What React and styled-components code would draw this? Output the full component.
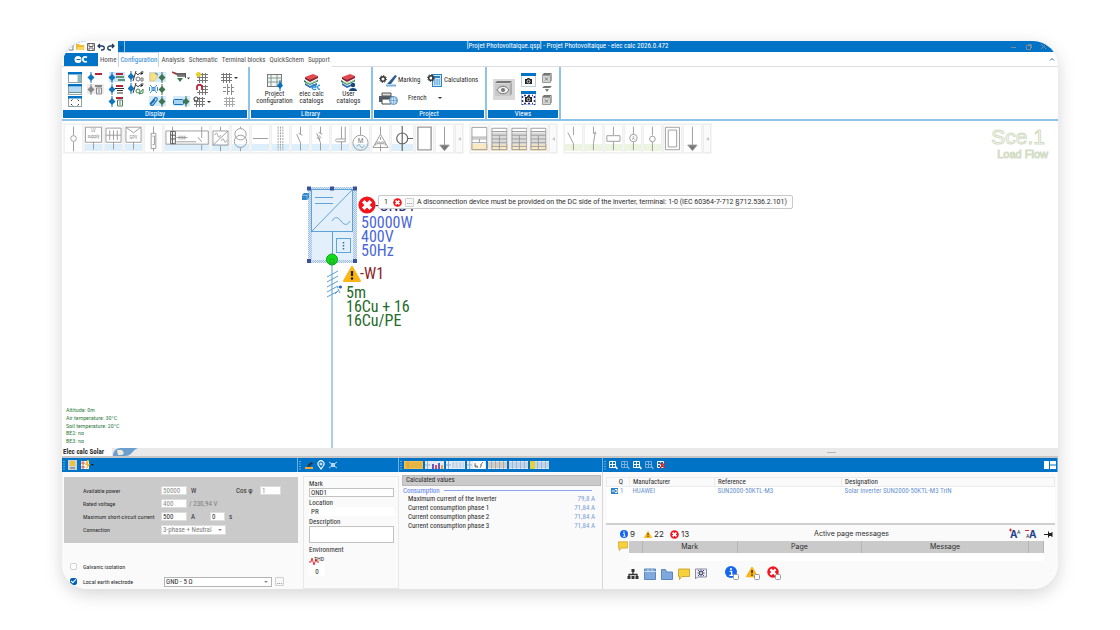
import React from 'react';
import styled, { createGlobalStyle } from 'styled-components';

const GlobalStyle = createGlobalStyle`
  * {
    box-sizing: border-box;
  }

  body {
    margin: 0;
    background: #ffffff;
    color: #2c2c2c;
    font-family: 'Roboto Condensed', 'Liberation Sans Narrow', 'Liberation Sans', sans-serif;
    font-size: 7px;
    line-height: 8px;
  }

  button, input, select, textarea {
    margin: 0;
    padding: 0;
    font: inherit;
    color: inherit;
  }

  svg {
    display: block;
    flex: none;
  }
`;

const blue = '#0173c7';
const paleBlue = '#8fc3ea';
const ink = '#3a3a3a';

/* ---------- window ---------- */

const Page = styled.div`
  padding: 41px 62px;
`;

const Window = styled.main`
  overflow: hidden;
  border-radius: 25px;
  background: #ffffff;
  box-shadow: 0 5px 18px rgba(0, 0, 0, 0.17);
`;

const TitleBar = styled.header`
  display: flex;
  height: 11px;
  background: ${blue};
  color: #ffffff;
`;

const QuickAccess = styled.div`
  display: flex;
  align-items: center;
  gap: 2px;
  width: 56px;
  padding-left: 4px;
  background: #ffffff;
`;

const Title = styled.h1`
  flex: 1;
  margin: 0;
  font-size: 7px;
  font-weight: normal;
  line-height: 10px;
  text-align: center;
`;

const WindowControls = styled.div`
  display: flex;
  align-items: center;
  gap: 8px;
  width: 48px;
`;

const IconButton = styled.button`
  display: flex;
  align-items: center;
  justify-content: center;
  border: 0;
  background: none;
`;

const TabRow = styled.nav`
  display: flex;
  height: 15px;
  padding-left: 2px;
  border-bottom: 1px solid #dedede;
`;

const AppButton = styled.button`
  display: flex;
  align-items: center;
  justify-content: center;
  width: 34px;
  height: 13px;
  margin: 1px 0 0;
  border: 0;
  background: ${blue};
`;

const Tab = styled.button`
  height: 15px;
  padding: 0 1px;
  border: 1px solid ${props => (props.$active ? '#bcd9ee' : 'transparent')};
  border-bottom: 0;
  background: #ffffff;
  color: ${props => (props.$active ? '#2a86cf' : '#505050')};
`;

const Collapse = styled(IconButton)`
  margin-left: auto;
  width: 12px;
`;

/* ---------- ribbon ---------- */

const Ribbon = styled.section`
  display: flex;
  height: 54px;
  border-bottom: 2px solid ${paleBlue};
`;

const Group = styled.section`
  display: flex;
  flex-direction: column;
  width: ${props => props.$width}px;
  border-right: 2px solid ${paleBlue};
  padding: 1px 1px 1px 0;
`;

const GroupBody = styled.div`
  flex: 1;
  display: flex;
  align-items: center;
`;

const GroupTitle = styled.h2`
  margin: 0 0 0 1px;
  height: 8px;
  background: ${blue};
  color: #ffffff;
  font-size: 7px;
  font-weight: normal;
  line-height: 8px;
  text-align: center;
`;

const DisplayGrid = styled.div`
  display: grid;
  grid-template-columns: 20px 20px 22px 18px 24px 24px 18px 36px;
  grid-template-rows: repeat(3, 12px);
  grid-auto-flow: column;
  padding-left: 3px;
  place-items: center;
`;

const BigButton = styled.button`
  display: flex;
  flex-direction: column;
  align-items: center;
  width: 37px;
  border: 0;
  background: none;
  line-height: 7px;
`;

const LibraryBody = styled(GroupBody)`
  justify-content: center;
  padding-left: 3px;
`;

const ProjectGrid = styled.div`
  display: grid;
  grid-template-columns: 48px 1fr;
  grid-template-rows: 18px 18px;
  width: 100%;
  padding-left: 6px;
`;

const InlineButton = styled.button`
  display: flex;
  align-items: center;
  gap: 1px;
  border: 0;
  background: none;
`;

const LanguageRow = styled.div`
  grid-column: 1 / 3;
  display: flex;
  align-items: center;
  gap: 10px;
`;

const Language = styled.select`
  width: 38px;
  border: 0;
  background: none;
  appearance: none;
`;

const Caret = styled.span`
  width: 0;
  margin-left: ${props => (props.$pull ? '-18px' : '0')};
  border: 2px solid transparent;
  border-top-color: #333333;
  border-bottom: 0;
`;

const ViewsBody = styled(GroupBody)`
  gap: 6px;
  padding-left: 6px;
`;

const Column = styled.div`
  display: flex;
  flex-direction: column;
  gap: ${props => props.$gap}px;
`;

/* ---------- drawing area ---------- */

const Canvas = styled.section`
  position: relative;
  height: 327px;
`;

const Palettes = styled.div`
  display: flex;
  align-items: flex-start;
  gap: 5px;
  padding: 2px 1px;

  text {
    fill: #8a8a8a;
    stroke: none;
  }
`;

const Palette = styled.div`
  display: flex;
  gap: 1px;
  width: ${props => props.$width}px;
  padding: 1px;
  background: #f5f5f5;
`;

const Cell = styled.button`
  flex: ${props => props.$span || 1} 1 0;
  min-width: 0;
  height: 29px;
  padding: 0;
  border: 1px solid #f0f0f0;
  background: ${props =>
    props.$tint
      ? `linear-gradient(#ffffff 70%, ${props.$tint} 70%, ${props.$tint} 96%, #ffffff 96%)`
      : '#ffffff'};

  svg {
    width: 100%;
    height: 27px;
  }
`;

const Fold = styled.button`
  display: flex;
  align-items: center;
  justify-content: center;
  width: 8px;
  border: 1px solid #ececec;
  background: #fafafa;
`;

const Scenario = styled.div`
  position: absolute;
  top: 5px;
  right: 10px;
  color: #ffffff;
  text-align: right;
  font-family: 'Liberation Sans', Arial, sans-serif;
  -webkit-text-stroke: 1px #d3ddc6;
`;

const ScenarioName = styled.div`
  padding-right: 3px;
  font-size: 21px;
  line-height: 22px;
`;

const ScenarioMode = styled.div`
  font-size: 11px;
  line-height: 12px;
`;

const Node = styled.div`
  position: absolute;
  left: ${props => props.$x}px;
  top: ${props => props.$y}px;
  color: ${props => props.$color};
  font-size: 16px;
  line-height: 14px;
  white-space: nowrap;
`;

const Wire = styled.div`
  position: absolute;
  left: 269px;
  top: 140px;
  bottom: 0;
  width: 2px;
  background: #a9cfea;
`;

const Message = styled.div`
  position: absolute;
  left: 316px;
  top: 74px;
  display: flex;
  align-items: center;
  width: 415px;
  height: 14px;
  border: 1px solid #c9c9c9;
  border-radius: 2px;
  background: #fdfdfd;
  font-family: Roboto, 'Liberation Sans', sans-serif;
  font-size: 7px;
  white-space: nowrap;
`;

const MessageCount = styled.span`
  width: 14px;
  text-align: center;
`;

const MoreButton = styled.button`
  width: ${props => props.$width}px;
  height: 9px;
  border: 1px solid #d0d0d0;
  border-radius: 1px;
  background: #f8f8f8;
  line-height: 4px;
`;

const MessageText = styled.span`
  padding-left: 3px;
`;

const MessageMore = styled(MoreButton)`
  margin-left: 3px;
`;

const Conditions = styled.ul`
  position: absolute;
  left: 4px;
  bottom: 4px;
  display: flex;
  flex-direction: column;
  justify-content: space-between;
  height: 38px;
  margin: 0;
  padding: 0;
  list-style: none;
  color: #2f7d43;
  font-size: 6px;
  line-height: 7px;
`;

/* ---------- page tabs ---------- */

const PageTabs = styled.div`
  display: flex;
  align-items: center;
  height: 10px;
  border-bottom: 2px solid #c6c6c6;
  background: #e9e9e9;
`;

const PageTab = styled.button`
  height: 8px;
  padding: 0 8px 0 1px;
  border: 0;
  background: #ffffff;
  font-weight: bold;
`;

const Grip = styled.span`
  width: 9px;
  height: 1px;
  margin-left: auto;
  margin-right: 222px;
  background: #b5b5b5;
`;

/* ---------- bottom panels ---------- */

const Bottom = styled.section`
  display: grid;
  grid-template-columns: 236px 101px 204px 1fr;
  grid-template-rows: 14px 117px;
  background: #fafafa;
`;

const Toolbar = styled.div`
  display: flex;
  align-items: center;
  gap: ${props => props.$gap}px;
  padding: 0 1px;
  border-right: 1px solid #6db1e2;
  background: ${blue};
`;

const ToolbarEnd = styled.span`
  margin-left: auto;
`;

const PropertyPanel = styled.form`
  padding: 5px 0 0 2px;
`;

const GreyArea = styled.div`
  padding: 7px 0 7px 19px;
  background: #cacaca;
`;

const FormRow = styled.div`
  display: flex;
  align-items: center;
  height: 13px;
`;

const FormLabel = styled.label`
  width: 78px;
  font-size: 6px;
  white-space: nowrap;
`;

const Field = styled.input`
  width: ${props => props.$width}px;
  height: 9px;
  padding: 0 1px;
  border: 1px solid #dcdcdc;
  background: #ffffff;

  &:disabled {
    color: #8d8d8d;
  }
`;

const Unit = styled.span`
  width: ${props => props.$width}px;
  padding-left: ${props => props.$indent || 4}px;
  color: ${props => (props.$muted ? '#7d7d7d' : 'inherit')};
`;

const CosLabel = styled.label`
  width: 24px;
`;

const SelectBox = styled.div`
  display: flex;
  align-items: center;
  width: ${props => props.$width}px;
  height: 10px;
  border: 1px solid ${props => (props.$strong ? '#b4b4b4' : '#dedede')};
  background: #ffffff;
  color: ${props => (props.$strong ? 'inherit' : '#7d7d7d')};
`;

const Picker = styled.select`
  flex: 1;
  min-width: 0;
  border: 0;
  padding-left: 1px;
  background: none;
  appearance: none;

  &:disabled {
    opacity: 1;
  }
`;

const SmallCaret = styled(Caret)`
  margin-right: 3px;
  border-top-color: #8a8a8a;
`;

const Options = styled.div`
  padding: 16px 0 0 6px;
`;

const Option = styled.div`
  display: flex;
  align-items: center;
  height: 15px;
`;

const Tick = styled.input`
  appearance: none;
  width: 7px;
  height: 7px;
  margin-right: 6px;
  border: 1px solid #cfcfcf;
  border-radius: 2px;
  background: #ffffff;

  &:checked {
    border-color: #0062b8;
    background: #0062b8;
  }

  &:checked::after {
    content: '';
    display: block;
    width: 4px;
    height: 2px;
    border: solid #ffffff;
    border-width: 0 0 1px 1px;
    rotate: -45deg;
  }
`;

const OptionLabel = styled.label`
  width: 81px;
  font-size: 6px;
`;

const IdentityPanel = styled.form`
  display: flex;
  flex-direction: column;
  margin: 4px 0 0 5px;
  padding: 3px 4px 0 5px;
  border: 1px solid #e8e8e8;
`;

const TextField = styled.input`
  height: 9px;
  margin-bottom: 2px;
  padding: 0 1px;
  border: 1px solid ${props => (props.$plain ? '#ffffff' : '#c2c2c2')};
  background: #ffffff;
`;

const TextArea = styled.textarea`
  height: 17px;
  margin-bottom: 3px;
  border: 1px solid #c2c2c2;
  background: #ffffff;
  resize: none;
`;

const Thd = styled.output`
  display: flex;
  flex-direction: column;
  align-items: center;
  gap: 2px;
  width: 16px;
  padding-top: 2px;
  background: linear-gradient(#fafafa, #ffffff);
`;

const ResultsPanel = styled.section`
  padding: 3px 1px 0 3px;
  border-right: 1px solid #d8d8d8;
`;

const PanelTitle = styled.h3`
  margin: 0;
  padding-left: 3px;
  height: 11px;
  border: 1px solid #b9b9b9;
  background: #cbcbcb;
  font-size: 7px;
  font-weight: normal;
  line-height: 9px;
`;

const Section = styled.h4`
  display: flex;
  align-items: center;
  gap: 4px;
  height: 9px;
  margin: 0;
  padding: 0 9px 0 1px;
  color: #5b7fe8;
  font-size: 7px;
  font-weight: normal;

  &::after {
    content: '';
    flex: 1;
    height: 1px;
    background: #8ba4ee;
  }
`;

const Results = styled.table`
  width: 100%;
  border-collapse: collapse;

  td,
  th {
    height: 9px;
    padding: 0 6px;
    font-weight: normal;
    line-height: 9px;
    text-align: left;
  }

  td {
    color: #7aa0d8;
    text-align: right;
  }
`;

const ReferencePanel = styled.section`
  display: flex;
  flex-direction: column;
  padding: 5px 3px 0;
`;

const Articles = styled.table`
  width: 100%;
  table-layout: fixed;
  border-collapse: collapse;
  background: #ffffff;

  th,
  td {
    height: 8px;
    padding: 0 0 0 3px;
    font-weight: normal;
    text-align: left;
    white-space: nowrap;
  }

  th {
    border: 1px solid #ebebeb;
    background: #fafafa;
  }

  td {
    color: #6b93d0;
  }
`;

const ArticleArea = styled.div`
  height: 48px;
  background: #ffffff;
  border-bottom: 2px solid #cfcfcf;
`;

const Qty = styled.span`
  display: flex;
  align-items: center;
  justify-content: flex-end;
  gap: 2px;
  padding-right: 6px;
  margin-left: -3px;
`;

const MessageBar = styled.div`
  display: flex;
  align-items: center;
  height: 16px;
  padding: 2px 2px 0 14px;
  font-family: Inter, 'Liberation Sans', sans-serif;
`;

const Counter = styled.span`
  display: flex;
  align-items: center;
  gap: 2px;
  width: ${props => props.$width}px;
  font-size: 8px;
`;

const MessageHeading = styled.h3`
  flex: 1;
  margin: 0;
  font-size: 7px;
  font-weight: normal;
  text-align: center;
`;

const FontTools = styled.div`
  display: flex;
  align-items: center;
  gap: 3px;
`;

const MessageRow = styled.div`
  display: flex;
  gap: 1px;
  padding: 0 11px 0 12px;
`;

const Messages = styled.table`
  flex: 1;
  table-layout: fixed;
  border-collapse: collapse;
  font-family: Inter, 'Liberation Sans', sans-serif;

  th {
    height: 12px;
    padding: 0;
    border-right: 1px solid #b5b5b5;
    background: #cacaca;
    font-weight: normal;
  }

  td {
    height: 8px;
    padding: 0;
    background: #ffffff;
  }
`;

const FilterBar = styled.div`
  display: flex;
  align-items: center;
  gap: 5px;
  padding: 5px 0 0 21px;
`;

const FilterGap = styled.span`
  width: 8px;
`;

/* ---------- icons ---------- */

const Svg = ({ w, h, children, ...rest }) => (
  <svg
    width={w}
    height={h}
    viewBox={`0 0 ${w} ${h}`}
    fill="none"
    stroke={ink}
    strokeWidth="1"
    aria-hidden="true"
    {...rest}>
    {children}
  </svg>
);

const PanelIcon = ({ kind }) => (
  <Svg w={14} h={11} stroke="none">
    <rect x=".5" y="1.5" width="13" height="9" fill="#fff" stroke="#8fa5a5" />
    <rect width="14" height="2.5" fill={blue} />
    {kind === 'side' && <rect x="9.5" y="2.5" width="3.5" height="7.5" fill="#8fb9b9" />}
    {kind === 'fill' && <rect x="1" y="3" width="12" height="5" fill="#b5daf2" />}
    {kind === 'fill' && <path d="M1 8.5h12" stroke="#6f8f8f" />}
    {kind === 'expand' && (
      <path d="M3 5l1.500-1.500M11 5L9.500 3.500M3 8l1.500 1.500M11 8L9.500 9.500" stroke="#333" />
    )}
  </Svg>
);

const Diamond = ({ x = 0, color = '#1274bd' }) => (
  <g>
    <path d={`M${x + 3} 0v11`} stroke={color} fill="none" />
    <path d={`M${x + 3} 2l3.500 3.500-3.500 3.500-3.500-3.500z`} fill={color} stroke="none" />
  </g>
);

const LabelIcon = ({ kind }) => (
  <Svg w={17} h={11} stroke="none">
    {kind === 'hover' && <rect x="1" width="16" height="10" fill="#cfe6fa" />}
    {kind === 'off' && <rect width="17" height="10" fill="#ececec" />}
    <Diamond x={1} color={kind === 'off' ? '#888' : '#1274bd'} />
    <rect x="8" y="1" width="7" height="2" fill={kind === 'off' ? '#888' : '#b3263a'} />
    {kind === 'hover' && <path d="M8 5h8M10 8h7" stroke="#3b7c4e" strokeWidth="1.500" />}
    {kind === 'lines' && <path d="M7 4.500h9M9 6.500h6M9 9h6" stroke="#333" strokeWidth="1.200" />}
    {(kind === 'bin' || kind === 'off') && (
      <path d="M9.500 4h5v6h-5zM11 6h2M11 8h2" stroke={kind === 'off' ? '#888' : '#4a7d5c'} />
    )}
  </Svg>
);

const ToolsIcon = ({ alt }) => (
  <Svg w={16} h={12} stroke="none">
    <Diamond x={0} />
    <path d="M8 0L5 10" stroke="#333" />
    <path d="M8.500 2c0 2 3 2 3 0M13 4V1h2.500M13 2.500h2" stroke="#222" />
    <circle cx="10" cy="8" r="2" stroke={alt ? '#3c8a4c' : '#777'} />
    <path d={alt ? 'M11 11l4-5v4z' : 'M13 7h2v3h-2z'} stroke={alt ? '#3c8a4c' : '#777'} />
  </Svg>
);

const NoteIcon = ({ kind }) => (
  <Svg w={17} h={11} stroke="none">
    {kind !== 'net' && <rect width="17" height="10" fill="#d4e9fb" />}
    {kind === 'note' && <path d="M1 1h7v5l-3 3H1z" fill="#f6e08a" stroke="#d8bd55" strokeWidth=".6" />}
    {kind === 'note' && <path d="M6 1l3 2" stroke="#2f7fc4" />}
    {kind === 'net' && <path d="M1 1l7 8M8 1L1 9M3 3.500h3v3H3zM.5 3v4M8.500 3v4" stroke="#3b90d2" />}
    {kind === 'clip' && (
      <path d="M1 8l5-6c1-1 3 0 2 2L4 9C3 10 1 9 2 8l4-4" stroke="#1670b8" strokeWidth="1.200" />
    )}
    {kind === 'tag' && <rect x="0.500" y="3.500" width="10" height="5" rx="1" fill="#a9d3f2" stroke="#1670b8" />}
    <Diamond x={10} color="#3f7551" />
  </Svg>
);

const CableIcon = () => (
  <Svg w={18} h={12} stroke="none">
    <path d="M2 1l3 1h8v4H6z" fill="#666" />
    <path d="M0 1l4 2" stroke="#a33" strokeWidth="1.500" />
    <path d="M5 5h9" stroke="#999" />
    <path d="M5 7h6l-3 4z" fill="#3c7a4c" />
    <path d="M13.500 2v5" stroke="#555" />
    <path d="M15 6.500h3l-1.500 2z" fill="#444" />
  </Svg>
);

const GridIcon = ({ mark, caret, light }) => (
  <Svg w={caret ? 18 : 12} h={11} stroke="none">
    {mark !== 'cross' && (
      <path
        d="M1 2.500h11M1 5.500h11M1 8.500h11M3.500 1v10M6.500 1v10M9.500 1v10"
        stroke={light ? '#aaa' : '#777'}
      />
    )}
    {mark === 'sun' && <circle cx="2.500" cy="2.500" r="2.500" fill="#e4cf2e" />}
    {mark === 'magnet' && <path d="M1 6V3c0-3 5-3 5 0v3" fill="#fff" stroke="#c22338" strokeWidth="1.800" />}
    {mark === 'gear' && <circle cx="3" cy="3" r="2" fill="#fff" stroke="#444" strokeWidth="1.200" />}
    {mark === 'cross' && <path d="M0 3.500h12M0 7.500h12M4.500 0v11M8.500 0v11" stroke="#888" strokeDasharray="3 1" />}
    {caret && <path d="M14 5h4l-2 2z" fill="#333" />}
  </Svg>
);

const ProjectIcon = () => (
  <Svg w={16} h={18} stroke="none">
    <rect x=".5" y="1.500" width="14" height="12" fill="#f5f5f5" stroke="#777" />
    <path d="M0 5h15M0 9h15M4 2v11M10 2v11" stroke="#7c9c88" />
    <path d="M13 7v11" stroke={blue} />
    <path d="M13 9l3 3.500-3 3.500-3-3.500z" fill={blue} />
  </Svg>
);

const BooksIcon = ({ user }) => (
  <Svg w={17} h={18} stroke="none">
    <path d="M2 4l8-3 5 2-8 3.500z" fill="#e5484d" />
    <path d="M2 4l5 2.500 8-3.500v2L7 9 2 6z" fill="#8f1f2c" />
    <path d="M1 7l6 3 8-3.500v2L7 12 1 9z" fill="#2e8a57" />
    <path d="M2 10l5 3 7-3v2l-7 3-5-3z" fill="#2f6bb2" />
    <path d="M3 8.500l4 2 7-3" stroke="#fff" strokeWidth=".7" />
    {user ? (
      <g fill="#14457e">
        <circle cx="13" cy="12" r="2.200" />
        <path d="M9 18c0-4 8-4 8 0z" />
      </g>
    ) : (
      <path d="M9 14h4c0-3-4-3-4 0s3 3 4 2M17 12.500c-3-1.500-3 5 0 3.500" stroke="#2c8fd8" strokeWidth="1.300" />
    )}
  </Svg>
);

const Gear = ({ x, y }) => (
  <g>
    <circle cx={x} cy={y} r="2.300" stroke="#333" strokeWidth="1.500" />
    <circle cx={x} cy={y} r="3.500" stroke="#333" strokeDasharray="1.200 1.500" />
  </g>
);

const MarkingIcon = () => (
  <Svg w={18} h={13} stroke="none">
    <Gear x={4} y={5} />
    <path d="M8 10l8-9 2 1-6 8z" fill="#2c5a8f" />
    <path d="M7 11.500h10" stroke="#7aaede" strokeWidth="2" />
  </Svg>
);

const CalcIcon = () => (
  <Svg w={16} h={14} stroke="none">
    <rect x="5.500" y="1.500" width="9" height="12" fill="#cde7fa" stroke="#2c84c4" />
    <rect x="7" y="3" width="6" height="2" fill="#2c84c4" />
    <path d="M7 7h6M7 9h6M7 11h6" stroke="#2c84c4" strokeDasharray="1.500 .8" />
    <Gear x={4} y={5} />
  </Svg>
);

const PrinterIcon = () => (
  <Svg w={19} h={13} stroke="none">
    <path d="M3 1h9v3H3z" fill="#ddd" stroke="#555" />
    <path d="M0 4h15v6H0z" fill="#555d66" />
    <path d="M3 7h9v5H3z" fill="#fff" stroke="#444" />
    <circle cx="14.500" cy="8.500" r="4" fill="#cfe3f5" stroke="#5c93c7" />
    <path d="M10.500 8.500h8M14.500 4.500v8M12.500 5.500c-1 2-1 4 0 6M16.500 5.500c1 2 1 4 0 6" stroke="#5c93c7" strokeWidth=".6" />
  </Svg>
);

const EyeIcon = () => (
  <Svg w={22} h={21} stroke="none">
    <rect width="22" height="21" fill="#d9d9d9" />
    <path d="M2 4l2-2h15l-2 2z" fill="#777" />
    <path d="M2 5h15v12H2z" fill="#c8c8c8" />
    <path d="M4 11c3-5 9-5 12 0-3 5-9 5-12 0z" fill="#eee" stroke="#777" />
    <circle cx="10" cy="11" r="2" fill="#777" />
    <path d="M17 5l2-2v12l-2 2z" fill="#aaa" />
  </Svg>
);

const CameraIcon = ({ dotted }) => (
  <Svg w={15} h={14} stroke="none">
    <rect x=".5" y=".5" width="14" height="13" fill="#fff" stroke="#b9cfe0" />
    <rect width="15" height="3" fill={blue} />
    <path d="M4 6h2l.5-1h2l.5 1h2v5H4z" fill="#222" />
    <circle cx="7.500" cy="8.500" r="1.500" stroke="#fff" strokeWidth=".8" />
    {dotted && <path d="M1.500 5v9M13.500 5v9M3 12.500h9M3 4.500h9" stroke="#2a2f9a" strokeDasharray="2 2" strokeWidth="1.500" />}
  </Svg>
);

const BoxIcon = ({ small }) => (
  <Svg w={10} h={small ? 6 : 10} stroke="none">
    <path d="M0 2l2-2h8L8 2z" fill="#777" />
    {!small && <path d="M.5 2.500h8v7h-8z" fill="#d6d6d6" stroke="#999" />}
    {!small && <path d="M9.500 1v7" stroke="#aaa" />}
    {small ? <path d="M3 3h4L5 6z" fill="#777" /> : <path d="M3 4.500l3 3M6 4.500l-3 3" stroke="#777" />}
  </Svg>
);

const ErrorIcon = ({ size = 9 }) => (
  <svg width={size} height={size} viewBox="0 0 18 18" aria-hidden="true">
    <circle cx="9" cy="9" r="8.600" fill="#f3141c" />
    <path d="M5.200 5.200l7.600 7.600M12.800 5.200l-7.600 7.600" stroke="#fff" strokeWidth="3.600" />
  </svg>
);

const WarnIcon = ({ w = 9, h = 8 }) => (
  <svg width={w} height={h} viewBox="0 0 18 16" aria-hidden="true">
    <path d="M9 1l8 14H1z" fill="#fdb515" stroke="#fdb515" strokeWidth="2" strokeLinejoin="round" />
    <path d="M9 5v5" stroke="#222" strokeWidth="2.200" />
    <circle cx="9" cy="12.500" r="1.300" fill="#222" />
  </svg>
);

const InfoIcon = ({ size = 8 }) => (
  <svg width={size} height={size} viewBox="0 0 18 18" aria-hidden="true">
    <circle cx="9" cy="9" r="9" fill="#1565f0" />
    <path d="M7 8h3v6M6.500 14h6" stroke="#fff" strokeWidth="2" fill="none" />
    <circle cx="9" cy="4.500" r="1.600" fill="#fff" />
  </svg>
);

const NoteBubble = ({ size = 12 }) => (
  <svg width={size} height={size} viewBox="0 0 12 12" aria-hidden="true">
    <path d="M.5 1h11v7.500H4L1.500 11.500V8.500h-1z" fill="#f7d13c" stroke="#c79a1c" strokeWidth=".8" />
  </svg>
);

const GripDots = () => (
  <Svg w={2} h={9} stroke="none">
    <path d="M1 0v9" stroke="#c8e2f5" strokeDasharray="1 1.500" />
  </Svg>
);

const SheetIcon = ({ kind }) => (
  <Svg w={19} h={8} stroke="none">
    <rect width="19" height="8" fill={kind === 'gold' ? '#f0c45a' : '#e4edf5'} />
    {kind === 'gold' && <path d="M1 2h17M1 4h17M1 6h17M4 0v8" stroke="#d59e26" strokeWidth=".8" />}
    {['small', 'grid', 'table', 'split'].includes(kind) && (
      <path
        d={kind === 'small' ? 'M6 2h12M6 4h12M6 6h12' : 'M0 2h19M0 4h19M0 6h19M3.500 0v8M7.500 0v8M11.500 0v8M15.500 0v8'}
        stroke={kind === 'grid' ? '#a8a296' : '#8fb3d6'}
        strokeDasharray={kind === 'small' ? '2.500 1' : '0'}
        strokeWidth=".8"
      />
    )}
    {['bars', 'small', 'curve'].includes(kind) && <path d="M2.500 0v8M0 4h5" stroke="#8fb3d6" />}
    {kind === 'bars' && (
      <g strokeWidth="2">
        <path d="M8 8V3M14 8V2" stroke="#6c57c9" />
        <path d="M11 8V4" stroke="#df4b56" />
        <path d="M17 8V4" stroke="#e8a33a" />
      </g>
    )}
    {kind === 'curve' && (
      <g>
        <rect x="6" width="12" height="8" fill="#fff" />
        <path d="M8 2v4h3M8 4l3 2M13 7l1.500-3h-1L16 1" stroke="#555" strokeWidth=".8" />
      </g>
    )}
    {kind === 'split' && <rect width="5" height="8" fill="#e2d23c" />}
  </Svg>
);

const CatalogIcon = ({ kind }) => (
  <Svg w={9} h={10} stroke="none">
    <path
      d="M.5 1.500h6v6h-6zM.5 4.500h6M3.500 1.500v6"
      stroke={kind === 'dim' ? '#7cb0da' : '#fff'}
    />
    {kind === 'del' ? (
      <path d="M3 3l5 5M8 3L3 8" stroke="#d7262b" strokeWidth="1.600" />
    ) : (
      <path d="M6 6l2.500 3" stroke={kind === 'dim' ? '#7cb0da' : '#fff'} strokeWidth="1.500" />
    )}
  </Svg>
);

const FilterCheck = ({ children }) => (
  <Svg w={16} h={16} stroke="none">
    {children}
    <rect x="8.500" y="8.500" width="5" height="5" rx="1" fill="#fff" stroke="#999" />
  </Svg>
);

/* ---------- symbol drawings, 18 x 27 each ---------- */

const line = '#9a9a9a';

const symbols = {
  node: <path d="M9 1v9M9 17v10M9 10.500a3 3 0 100 6 3 3 0 100-6" />,
  supply: (
    <g>
      <path d="M.5 1.500h17v16H.5zM9 17v8" />
      <text x="9" y="7" textAnchor="middle">LV</text>
      <text x="9" y="13" textAnchor="middle">supply</text>
    </g>
  ),
  battery: <path d="M1 2.500h16v15H1zM9 17v8M1 10h16M5 5v10M9 5v10M13 5v10" />,
  gpv: (
    <g>
      <path d="M1 1.500h16v16H1zM1 1.500l8 6 8-6M9 17v8" />
      <text x="9" y="14" textAnchor="middle">GPV</text>
    </g>
  ),
  fuse: <path d="M9 1v7M6.500 8h5v16h-5zM8 11h2v9H8M9 24v3" />,
  inverter: <path d="M1 5.500h16v15H1zM1 20.500l16-15M9 1v4M9 21v6M3 10c1-3 2-3 3 0s2 3 3 0M10 16c1-3 2-3 3 0s2 1 3-1" />,
  transformer: <path d="M9 1v2M9 3a6 6 0 100 12A6 6 0 109 3M9 10a6 6 0 100 13 6 6 0 100-13M9 23v4" />,
  busbar: <path d="M1 13.500h16" />,
  conductors: <path d="M6.500 1v25M9 1v25M11.500 1v25" strokeDasharray="2 1" />,
  switch: <path d="M9 1v8M9 18v8M9 18L5 9M7 8l4 2" />,
  breaker: <path d="M9 1v7M9 18v8M9 18L5 8M7 7l4 2M5 13h3v3M7 10l3 3" />,
  contactor: <path d="M10 1v13M14 1v13M14 14h-8c-3 0-3 3 0 3h8zM10 17v9" />,
  motor: (
    <g>
      <path d="M9 1v9M9 10a8 8 0 100 16 8 8 0 100-16M5 22c2-3 3-2 4 0s3 1 4-1" />
      <text x="9" y="18" fontSize="8" textAnchor="middle">M</text>
    </g>
  ),
  delta: <path d="M9 1v8M9 9l8 14H1zM9 12v3M4 21a3 3 0 015-3 3 3 0 015 3M9 20v7M5 19h8" />,
  load: <path d="M9 1v25M9 8a5 5 0 100 11A5 5 0 109 8M14 13.500h8" stroke="#666" strokeWidth="1.200" />,
  frame: <path d="M2 1.500h14v24H2z" strokeWidth="1.500" />,
  arrow: (
    <g>
      <path d="M9 1v21" />
      <path d="M4 20.500h10l-5 6z" fill="#777" />
    </g>
  ),
  cabinet: <path d="M1 1.500h16v24H1zM1 12h16M1 14h16M1 18h16M9 14v4" />,
  shelves: (
    <g>
      <rect x="1" y="7" width="16" height="13" fill="#dadada" stroke="none" />
      <path d="M1 2.500h16v23H1zM1 6h16M1 10h16M1 14h16M1 18h16M1 22h16M9 10v16" />
    </g>
  ),
  open: <path d="M9 1v9M3 7l6 12M9 19v7" />,
  closed: <path d="M9 1v7h3M11 6L9 19v7" />,
  coil: <path d="M9 1v9M2 10.500h14v6H2zM9 17v9" />,
  ammeter: (
    <g>
      <path d="M9 1v8M9 9a4 4 0 100 8 4 4 0 100-8M9 17v9" />
      <text x="9" y="15" textAnchor="middle">A</text>
    </g>
  ),
  lamp: <path d="M9 1v9M9 11a3 3 0 100 6 3 3 0 100-6M9 17v10" />,
  door: (
    <g>
      <path d="M1.500 1.500h15v24h-15z" />
      <path d="M4.500 4.500h9v18h-9z" />
    </g>
  )
};

const sky = '#dceffb';
const sand = '#f8e8c4';
const leaf = '#edf5e0';

const palettes = [
  {
    width: 401,
    cells: [
      ['node'], ['supply', sky], ['battery', sky], ['gpv', sky], ['fuse'], ['charger', sky, 2.6],
      ['inverter', sky], ['transformer', sky], ['busbar', sky], ['conductors', sky],
      ['switch', sky], ['breaker', sky], ['contactor', sky], ['motor', sky], ['delta'],
      ['load', sky, 1.2], ['frame'], ['arrow']
    ]
  },
  { width: 89, cells: [['cabinet', sand], ['shelves', sand], ['shelves', sand], ['shelves', sand]] },
  {
    width: 149,
    cells: [['open', leaf], ['closed', leaf], ['coil', leaf], ['ammeter', leaf], ['lamp', leaf], ['door'], ['arrow']]
  }
];

const Symbol = ({ name }) =>
  name === 'charger' ? (
    <svg viewBox="0 0 47 27" fill="none" stroke={line} aria-hidden="true">
      <path d="M1 5.500h45v14H1zM8 1v4M39 1v12M39 20v6M35 12l4 5M12 17h21" />
      <path d="M6 6h5v13H6zM6 10h5M6 14h5M8 6v13" stroke="#555" />
      <path d="M12 12.500h12M15 10.500v4M17 10.500v4M19 10.500v4M21 10.500v4" />
    </svg>
  ) : (
    <svg viewBox="0 0 18 27" fill="none" stroke={line} fontSize="5" aria-hidden="true">
      {symbols[name]}
    </svg>
  );

const Drawn = styled(Svg)`
  position: absolute;
  left: 238px;
  top: 62px;
`;

const InverterNode = () => (
  <Drawn w={130} h={130} stroke="none">
    <defs>
      <pattern id="hatch" width="2" height="2" patternUnits="userSpaceOnUse">
        <rect width="2" height="2" fill="#dcebf9" />
        <rect width="1" height="1" fill="#a3bfdf" />
        <rect x="1" y="1" width="1" height="1" fill="#a3bfdf" />
      </pattern>
    </defs>
    <rect x="8" y="4" width="49" height="76" fill="url(#hatch)" />
    <rect x="12" y="8" width="41" height="69" fill="#e3f0fb" />
    <g stroke="#5fa4d8">
      <rect x="11.500" y="6.500" width="41" height="42" fill="#e3f0fb" />
      <path d="M11.500 48.500l41-42M15 14.500h18M15 20.500h18M32.500 49v27" />
      <path d="M32 38c3-5 6-4 9 0s6 5 9 0" />
      <rect x="36.500" y="55.500" width="14" height="14" />
    </g>
    <path d="M43.500 59v8" stroke="#2f6fb0" strokeWidth="1.500" strokeDasharray="1.500 1.500" />
    <g fill="#3c4f9e">
      <path d="M7 3.500h4v4H7zM30 3.500h4v4h-4zM53 3.500h4v4h-4zM7 76h4v4H7zM53 76h4v4h-4z" />
    </g>
    <path d="M2 12l2-2h5v5l-2 2H2z" fill="#2f86c9" />
    <path d="M2 12.500h5v4M7 12.500l2-2" stroke="#bcdcf3" strokeWidth=".6" />
    <circle cx="32" cy="76.500" r="5.500" fill="#0ae20f" stroke="#159a25" />
    <rect x="30" y="76" width="4" height="4" stroke="#2d9a38" />
    <path d="M27 94l11-6M27 99l11-6M27 104l11-6M27 109l11-6M27 114l11-6M37 105l3-2M38 106l2 4M35 111l4-4" stroke="#5da1d6" />
    <circle cx="40.500" cy="104" r="1.500" fill="#1a64b4" />
  </Drawn>
);

const results = [
  ['Maximum current of the inverter', '79,8 A'],
  ['Current consumption phase 1', '71,84 A'],
  ['Current consumption phase 2', '71,84 A'],
  ['Current consumption phase 3', '71,84 A']
];

const tabs = ['Home', 'Configuration', 'Analysis', 'Schematic', 'Terminal blocks', 'QuickSchem', 'Support'];

const displayIcons = [
  <PanelIcon kind="side" />,
  <PanelIcon kind="fill" />,
  <PanelIcon kind="expand" />,
  <LabelIcon />,
  <LabelIcon kind="off" />,
  null,
  <LabelIcon kind="hover" />,
  <LabelIcon kind="lines" />,
  <LabelIcon kind="bin" />,
  <ToolsIcon />,
  <ToolsIcon alt />,
  null,
  <NoteIcon kind="note" />,
  <NoteIcon kind="net" />,
  <NoteIcon kind="clip" />,
  <CableIcon />,
  null,
  <NoteIcon kind="tag" />,
  <GridIcon mark="sun" />,
  <GridIcon mark="magnet" />,
  <GridIcon mark="gear" caret />,
  <GridIcon caret />,
  <GridIcon mark="cross" light />,
  <GridIcon light />
];

const TitleArea = () => (
  <TitleBar>
    <QuickAccess>
      <Svg w={8} h={8} stroke="none"><path d="M3 7h4V1" stroke="#777" /></Svg>
      <Svg w={9} h={8} stroke="none"><path d="M0 1h3l1 1h4v5H0z" fill="#f2b92c" /><path d="M2 4h7L7 7H0z" fill="#fbd766" /></Svg>
      <Svg w={8} h={8} stroke="#666"><path d="M.5.5h7v7h-7zM2 .5v3h4v-3M2 7.500V5h4v2.500" /></Svg>
      <Svg w={8} h={8} stroke="#1d3c63"><path d="M3 1L1 3l2 2M1 3h4c3 0 3 4 0 4H4" strokeWidth="1.300" /></Svg>
      <Svg w={8} h={8} stroke="#1d3c63"><path d="M5 1l2 2-2 2M7 3H3C0 3 0 7 3 7h1" strokeWidth="1.300" /></Svg>
    </QuickAccess>
    <Svg w={7} h={11} stroke="none">
      <path d="M6.500 0v11" stroke="#8fc3ea" />
      <path d="M2 6h3M2 8h3" stroke="#154a7d" />
    </Svg>
    <Title>[Projet Photovoltaique.qsp] - Projet Photovoltaique - elec calc 2026.0.472</Title>
    <WindowControls>
      <IconButton aria-label="Minimize"><Svg w={7} h={7} stroke="#7d8b98"><path d="M1 4.500h5" /></Svg></IconButton>
      <IconButton aria-label="Restore"><Svg w={7} h={7} stroke="#7d8b98"><path d="M1.500 2.500h4v4h-4zM3 1.500h3.500V5" /></Svg></IconButton>
      <IconButton aria-label="Close"><Svg w={7} h={7} stroke="#7d8b98"><path d="M1 1l5 5M6 1L1 6" /></Svg></IconButton>
    </WindowControls>
  </TitleBar>
);

const RibbonArea = () => (
  <Ribbon>
    <Group $width={188}>
      <GroupBody>
        <DisplayGrid>
          {displayIcons.map((icon, i) =>
            icon ? <IconButton key={i}>{icon}</IconButton> : <span key={i} />
          )}
        </DisplayGrid>
      </GroupBody>
      <GroupTitle>Display</GroupTitle>
    </Group>
    <Group $width={123}>
      <LibraryBody>
        <BigButton><ProjectIcon />Project configuration</BigButton>
        <BigButton><BooksIcon />elec calc catalogs</BigButton>
        <BigButton><BooksIcon user />User<br />catalogs</BigButton>
      </LibraryBody>
      <GroupTitle>Library</GroupTitle>
    </Group>
    <Group $width={114}>
      <GroupBody>
        <ProjectGrid>
          <InlineButton><MarkingIcon />Marking</InlineButton>
          <InlineButton><CalcIcon />Calculations</InlineButton>
          <LanguageRow>
            <PrinterIcon />
            <Language aria-label="Language"><option>French</option></Language>
            <Caret $pull />
          </LanguageRow>
        </ProjectGrid>
      </GroupBody>
      <GroupTitle>Project</GroupTitle>
    </Group>
    <Group $width={74}>
      <ViewsBody>
        <IconButton aria-label="Show"><EyeIcon /></IconButton>
        <Column $gap={4}>
          <CameraIcon />
          <CameraIcon dotted />
        </Column>
        <Column $gap={3}>
          <BoxIcon />
          <BoxIcon small />
          <BoxIcon />
        </Column>
      </ViewsBody>
      <GroupTitle>Views</GroupTitle>
    </Group>
  </Ribbon>
);

const Drawing = () => (
  <Canvas>
    <Palettes>
      {palettes.map(palette => (
        <Palette key={palette.width} $width={palette.width}>
          {palette.cells.map(([name, tint, span], j) => (
            <Cell key={j} $tint={tint} $span={span} aria-label={name}>
              <Symbol name={name} />
            </Cell>
          ))}
          <Fold aria-label="Fold">
            <Svg w={4} h={6} stroke="none"><path d="M4 1v4L1 3z" fill="#c9c9c9" /></Svg>
          </Fold>
        </Palette>
      ))}
    </Palettes>
    <Scenario>
      <ScenarioName>Sce.1</ScenarioName>
      <ScenarioMode>Load Flow</ScenarioMode>
    </Scenario>
    <Wire />
    <InverterNode />
    <Node $x={313} $y={78} $color="#27307f">-GND1</Node>
    <Node $x={299} $y={95} $color="#4a67d8">50000W<br />400V<br />50Hz</Node>
    <Node $x={298} $y={146} $color="#8c1c24">-W1</Node>
    <Node $x={284} $y={165} $color="#1f6b2a">5m<br />16Cu + 16<br />16Cu/PE</Node>
    <Node $x={296} $y={75}><ErrorIcon size={18} /></Node>
    <Node $x={281} $y={145}><WarnIcon w={18} h={16} /></Node>
    <Message>
      <MessageCount>1</MessageCount>
      <ErrorIcon size={9} />
      <MessageMore $width={9} aria-label="Details">...</MessageMore>
      <MessageText>
        A disconnection device must be provided on the DC side of the inverter, terminal: 1-0 (IEC 60364-7-712 §712.536.2.101)
      </MessageText>
    </Message>
    <Conditions>
      <li>Altitude: 0m</li>
      <li>Air temperature: 30°C</li>
      <li>Soil temperature: 20°C</li>
      <li>BE2: no</li>
      <li>BE3: no</li>
    </Conditions>
  </Canvas>
);

const Properties = () => (
  <PropertyPanel>
    <GreyArea>
      <FormRow>
        <FormLabel htmlFor="power">Available power</FormLabel>
        <Field id="power" $width={26} defaultValue="50000" disabled />
        <Unit $width={49}>W</Unit>
        <CosLabel htmlFor="cos">Cos φ</CosLabel>
        <Field id="cos" $width={21} defaultValue="1" disabled />
      </FormRow>
      <FormRow>
        <FormLabel htmlFor="voltage">Rated voltage</FormLabel>
        <Field id="voltage" $width={26} defaultValue="400" disabled />
        <Unit $width={49} $indent={2} $muted>/ 230,94 V</Unit>
      </FormRow>
      <FormRow>
        <FormLabel htmlFor="short">Maximum short-circuit current</FormLabel>
        <Field id="short" $width={26} defaultValue="500" />
        <Unit $width={23}>A</Unit>
        <Field aria-label="Duration" $width={15} defaultValue="0" />
        <Unit $width={10}>s</Unit>
      </FormRow>
      <FormRow>
        <FormLabel htmlFor="connection">Connection</FormLabel>
        <SelectBox $width={65}>
          <Picker id="connection" disabled><option>3-phase + Neutral</option></Picker>
          <SmallCaret />
        </SelectBox>
      </FormRow>
    </GreyArea>
    <Options>
      <Option>
        <Tick id="galvanic" type="checkbox" />
        <OptionLabel htmlFor="galvanic">Galvanic isolation</OptionLabel>
      </Option>
      <Option>
        <Tick id="earth" type="checkbox" defaultChecked />
        <OptionLabel htmlFor="earth">Local earth electrode</OptionLabel>
        <SelectBox $width={108} $strong>
          <Picker aria-label="Earth electrode"><option>GND - 5 Ω</option></Picker>
          <SmallCaret />
        </SelectBox>
        <Unit $width={3} $indent={3} />
        <MoreButton $width={9} type="button">...</MoreButton>
      </Option>
    </Options>
  </PropertyPanel>
);

const Identity = () => (
  <IdentityPanel>
    <label htmlFor="mark">Mark</label>
    <TextField id="mark" defaultValue="OND1" />
    <label htmlFor="location">Location</label>
    <TextField id="location" $plain defaultValue="PR" />
    <label htmlFor="description">Description</label>
    <TextArea id="description" />
    <label htmlFor="thd">Environment</label>
    <Thd id="thd">
      <Svg w={16} h={10} stroke="none">
        <path d="M0 6h2l1-4 2 7 2-6 1 3h2" stroke="#e8323a" />
        <text x="5" y="5" fontSize="6" fill="#333">THD</text>
      </Svg>
      0
    </Thd>
  </IdentityPanel>
);

const References = () => (
  <ReferencePanel>
    <ArticleArea>
      <Articles>
        <colgroup>
          <col style={{ width: 23 }} />
          <col style={{ width: 85 }} />
          <col style={{ width: 127 }} />
          <col />
        </colgroup>
        <thead>
          <tr>
            <th><Qty>Q</Qty></th>
            <th>Manufacturer</th>
            <th>Reference</th>
            <th>Designation</th>
          </tr>
        </thead>
        <tbody>
          <tr>
            <td>
              <Qty>
                <Svg w={7} h={6} stroke="none">
                  <rect width="7" height="6" fill="#2f86c9" />
                  <path d="M1 3h3M4 1.500h2v3H4" stroke="#fff" />
                </Svg>
                1
              </Qty>
            </td>
            <td>HUAWEI</td>
            <td>SUN2000-50KTL-M3</td>
            <td>Solar inverter SUN2000-50KTL-M3 TriN</td>
          </tr>
        </tbody>
      </Articles>
    </ArticleArea>
    <MessageBar>
      <Counter $width={24}><InfoIcon />9</Counter>
      <Counter $width={26}><WarnIcon w={8} h={7} />22</Counter>
      <Counter $width={24}><ErrorIcon size={9} />13</Counter>
      <MessageHeading>Active page messages</MessageHeading>
      <FontTools>
        <Svg w={13} h={12} stroke="none">
          <text x="1" y="10" fontSize="10" fontWeight="bold" fill="#23428f">A</text>
          <text x="8" y="6" fontSize="5" fill="#333">A</text>
          <path d="M0 2h3M1.500.5v3" stroke="#e0282c" />
        </Svg>
        <Svg w={13} h={12} stroke="none">
          <text x="4" y="10" fontSize="10" fontWeight="bold" fill="#23428f">A</text>
          <text x="1" y="10" fontSize="5" fill="#333">A</text>
          <path d="M0 2.500h4" stroke="#e0282c" />
        </Svg>
        <Svg w={12} h={9} stroke="none">
          <path d="M3 4.500h4M7.500 1.500v6M11 2v5" stroke="#222" />
          <path d="M7 3h4v3H7z" fill="#222" />
        </Svg>
      </FontTools>
    </MessageBar>
    <MessageRow>
      <NoteBubble size={10} />
      <Messages>
        <colgroup>
          <col style={{ width: 13 }} />
          <col style={{ width: '23%' }} />
          <col style={{ width: '30%' }} />
          <col />
          <col style={{ width: 15 }} />
        </colgroup>
        <thead>
          <tr>
            <th />
            <th>Mark</th>
            <th>Page</th>
            <th>Message</th>
            <th />
          </tr>
        </thead>
        <tbody>
          <tr><td colSpan={5} /></tr>
        </tbody>
      </Messages>
    </MessageRow>
    <FilterBar>
      <Svg w={12} h={12} stroke="#333">
        <path d="M6 2v5M2 9V6.500h8V9" strokeWidth="1.300" />
        <path d="M4.500 1h3v3h-3zM.5 8h3v3h-3zM4.500 8h3v3h-3zM8.500 8h3v3h-3z" fill="#333" stroke="none" />
      </Svg>
      <Svg w={12} h={12} stroke="none">
        <path d="M.5 1h11v10.500H.5z" fill="#7fa9dd" stroke="#5b87c0" />
        <path d="M0 3.500h12M4 1v2.500M8 1v2.500" stroke="#dbe8f6" strokeWidth=".8" />
      </Svg>
      <Svg w={12} h={12} stroke="none"><path d="M.5 1.500h4l1 2.500h6v7.500H.5z" fill="#7fa9dd" stroke="#5b87c0" /></Svg>
      <NoteBubble />
      <Svg w={12} h={12} stroke="#555">
        <path d="M.5 1v10l2-2h9V1z" fill="#eeeef6" stroke="#8a8aa0" />
        <path d="M3 2l6 6M9 2L3 8M6 1.500v7M2.500 5h7" stroke="#454a8c" />
        <circle cx="6" cy="5" r="1.500" fill="#fff" />
      </Svg>
      <FilterGap />
      <FilterCheck><InfoIcon size={12} /></FilterCheck>
      <FilterCheck><WarnIcon w={12} h={12} /></FilterCheck>
      <FilterCheck><ErrorIcon size={12} /></FilterCheck>
    </FilterBar>
  </ReferencePanel>
);

const App = () => (
  <Page>
    <GlobalStyle />
    <Window>
      <TitleArea />
      <TabRow>
        <AppButton aria-label="Application menu">
          <Svg w={14} h={9} stroke="#fff">
            <circle cx="4" cy="4.500" r="3.500" fill="#fff" stroke="none" />
            <path d="M2.500 4.500h4" stroke={blue} />
            <path d="M13 2.500c-5-3-6 6 0 4" strokeWidth="1.800" />
          </Svg>
        </AppButton>
        {tabs.map(tab => (
          <Tab key={tab} $active={tab === 'Configuration'}>{tab}</Tab>
        ))}
        <Collapse aria-label="Collapse ribbon">
          <Svg w={6} h={5} stroke="#2f6fa8"><path d="M1 3.500l2-2 2 2" /></Svg>
        </Collapse>
      </TabRow>
      <RibbonArea />
      <Drawing />
      <PageTabs>
        <PageTab>Elec calc Solar</PageTab>
        <Svg w={26} h={8} stroke="none">
          <path d="M1 8c0-5 3-8 8-8h17c-5 1-6 8-13 8z" fill="#6a9fd0" />
          <path d="M5 2h5l2 3-2 2H6z" fill="#eee8d8" />
        </Svg>
        <Grip />
      </PageTabs>
      <Bottom>
        <Toolbar $gap={3}>
          <GripDots />
          <Svg w={9} h={10} stroke="none">
            <rect width="9" height="10" fill="#cdd3d6" />
            <path d="M2 1h5v5H2z" fill="#f0c13a" />
            <path d="M2 8h5" stroke="#56717f" />
          </Svg>
          <Svg w={14} h={10} stroke="none">
            <rect x="1" y="1" width="8" height="8" fill="#fff" />
            <path d="M1 3h4M1 7h4M3 1v8" stroke="#d0575c" />
            <path d="M7 0L5 5h2l-1 5 4-6H8l1-4z" fill="#f4b91f" />
            <path d="M10.500 4h3.500l-1.700 2z" fill="#123" />
          </Svg>
        </Toolbar>
        <Toolbar $gap={4}>
          <GripDots />
          <Svg w={8} h={9} stroke="none">
            <path d="M2 5l4-4 2 1-4 4z" fill="#333" />
            <path d="M0 7h8" stroke="#f0a93a" strokeWidth="2" />
          </Svg>
          <Svg w={8} h={10} stroke="#fff">
            <path d="M4 9L1.500 5.500a3 3 0 115 0z" strokeWidth="1.200" />
            <circle cx="4" cy="4" r="1" />
          </Svg>
          <Svg w={8} h={8} stroke="#bcdcf3"><path d="M0 1l8 6M8 1L0 7M2.500 2.500h3v3h-3z" /></Svg>
        </Toolbar>
        <Toolbar $gap={2}>
          <GripDots />
          <SheetIcon kind="gold" />
          <SheetIcon kind="bars" />
          <SheetIcon kind="small" />
          <SheetIcon kind="curve" />
          <SheetIcon kind="grid" />
          <SheetIcon kind="table" />
          <SheetIcon kind="split" />
        </Toolbar>
        <Toolbar $gap={3}>
          <GripDots />
          <CatalogIcon />
          <CatalogIcon kind="dim" />
          <CatalogIcon />
          <CatalogIcon kind="dim" />
          <CatalogIcon kind="del" />
          <ToolbarEnd>
            <Svg w={12} h={8} stroke="none">
              <rect width="12" height="8" fill="#fff" />
              <path d="M5.500 0v8M6 4h6" stroke={blue} />
            </Svg>
          </ToolbarEnd>
        </Toolbar>
        <Properties />
        <Identity />
        <ResultsPanel>
          <PanelTitle>Calculated values</PanelTitle>
          <Section>Consumption</Section>
          <Results>
            <tbody>
              {results.map(([name, value]) => (
                <tr key={name}>
                  <th scope="row">{name}</th>
                  <td>{value}</td>
                </tr>
              ))}
            </tbody>
          </Results>
        </ResultsPanel>
        <References />
      </Bottom>
    </Window>
  </Page>
);

export default App;
